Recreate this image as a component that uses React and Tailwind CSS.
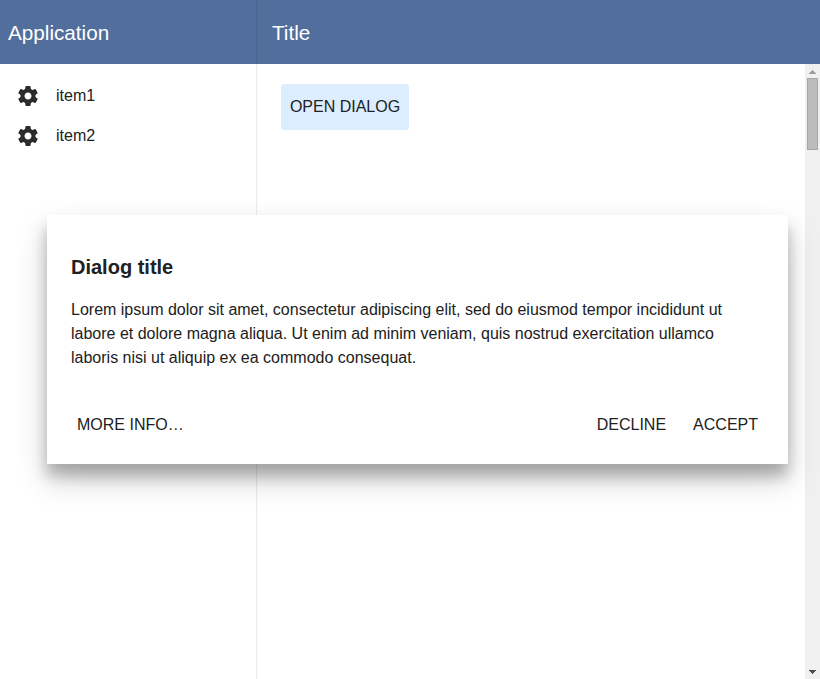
function GearIcon() {
  return (
    <svg className="size-6" viewBox="0 0 24 24" fill="#2b2b2b">
      <path d="M19.43 12.98c.04-.32.07-.64.07-.98s-.03-.66-.07-.98l2.11-1.65c.19-.15.24-.42.12-.64l-2-3.46c-.12-.22-.39-.3-.61-.22l-2.49 1c-.52-.4-1.08-.73-1.69-.98l-.38-2.65C14.46 2.18 14.25 2 14 2h-4c-.25 0-.46.18-.49.42l-.38 2.65c-.61.25-1.17.59-1.69.98l-2.49-1c-.23-.09-.49 0-.61.22l-2 3.46c-.13.22-.07.49.12.64l2.11 1.65c-.04.32-.07.65-.07.98s.03.66.07.98l-2.11 1.65c-.19.15-.24.42-.12.64l2 3.46c.12.22.39.3.61.22l2.49-1c.52.4 1.08.73 1.69.98l.38 2.65c.03.24.24.42.49.42h4c.25 0 .46-.18.49-.42l.38-2.65c.61-.25 1.17-.59 1.69-.98l2.49 1c.23.09.49 0 .61-.22l2-3.46c.12-.22.07-.49-.12-.64l-2.11-1.65zM12 15.5c-1.93 0-3.5-1.57-3.5-3.5s1.57-3.5 3.5-3.5 3.5 1.57 3.5 3.5-1.57 3.5-3.5 3.5z" />
    </svg>
  );
}

function NavItem({ label }) {
  return (
    <a className="flex h-10 items-center gap-4 px-4">
      <GearIcon />
      <span>{label}</span>
    </a>
  );
}

function Scrollbar() {
  return (
    <div className="flex w-[15px] shrink-0 flex-col items-center bg-[#f0f0f0]">
      <svg className="h-[14px] w-[15px] shrink-0" viewBox="0 0 15 14" shapeRendering="crispEdges" fill="#9c9c9c">
        <path d="M7 6h1v1h1v1h1v1h1v1H4V9h1V8h1V7h1z" />
      </svg>
      <div className="h-[72px] w-[11px] border border-[#a6a6a6] bg-[#bcbcbc]" />
      <svg className="mt-auto h-[14px] w-[15px] shrink-0" viewBox="0 0 15 14" shapeRendering="crispEdges" fill="#505050">
        <path d="M4 5h7v1h-1v1H9v1H8v1H7V8H6V7H5V6H4z" />
      </svg>
    </div>
  );
}

function Dialog() {
  return (
    <section
      role="dialog"
      className="absolute top-[215px] left-[47px] z-10 flex h-[249px] w-[741px] flex-col bg-white shadow-[0_12px_14px_0_rgba(0,0,0,0.26),0_16px_32px_0_rgba(0,0,0,0.16)]"
    >
      <h2 className="mt-[38px] px-6 text-[20px] leading-7 font-bold">Dialog title</h2>
      <p className="mt-[17px] px-6 leading-6">
        Lorem ipsum dolor sit amet, consectetur adipiscing elit, sed do eiusmod tempor incididunt ut labore et dolore
        magna aliqua. Ut enim ad minim veniam, quis nostrud exercitation ullamco laboris nisi ut aliquip ex ea commodo
        consequat.
      </p>
      <div className="mt-[43px] flex gap-[27px] px-[30px] leading-6">
        <button className="mr-auto">MORE INFO…</button>
        <button>DECLINE</button>
        <button>ACCEPT</button>
      </div>
    </section>
  );
}

export default function App() {
  return (
    <div className="relative flex h-[679px] w-[820px] overflow-hidden bg-white font-['Liberation_Sans',Arial,sans-serif] text-base text-[#212121]">
      <aside className="relative flex w-64 shrink-0 flex-col shadow-[1px_0_1px_rgba(0,0,0,0.08)]">
        <header className="flex h-16 shrink-0 items-center bg-[#526e9c] px-2 pt-[2px] text-[20.7px] leading-8 text-white">
          Application
        </header>
        <nav className="flex-1 bg-white pt-3">
          <NavItem label="item1" />
          <NavItem label="item2" />
        </nav>
      </aside>
      <main className="flex min-w-0 flex-1 flex-col">
        <header className="flex h-16 shrink-0 items-center bg-[#526e9c] px-4 pt-[2px] text-[20.7px] leading-8 text-white">
          Title
        </header>
        <div className="flex flex-1">
          <div className="flex-1 px-[25px] pt-5">
            <button className="h-[46px] w-32 rounded-[3px] bg-[#dcedff] text-center">OPEN DIALOG</button>
          </div>
          <Scrollbar />
        </div>
      </main>
      <Dialog />
    </div>
  );
}
